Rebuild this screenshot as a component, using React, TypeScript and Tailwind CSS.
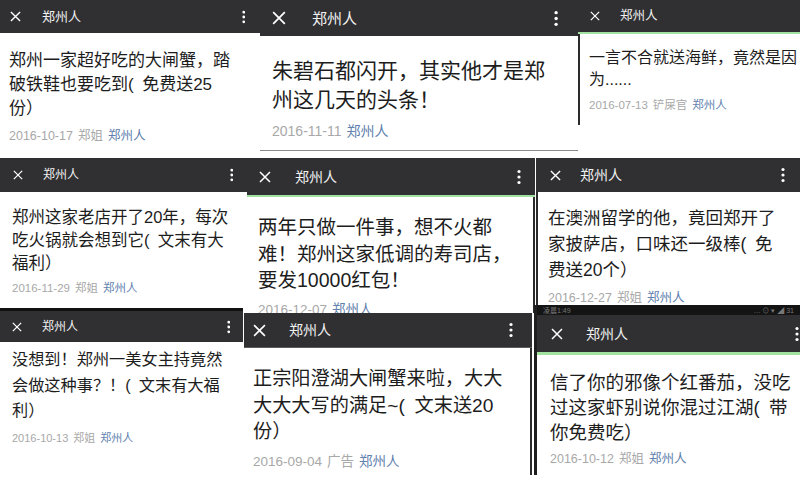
type Shot = {
  box: string;
  head: string;
  x: string;
  name: string;
  dots?: string;
  green?: string;
  status?: boolean;
  body: string;
  title: string;
  lines: string[];
  meta: string;
  date: string;
  author?: string;
};

// opening paren in the shots sits on the left of its cell, so "(" + en space
const shots: Shot[] = [
  {
    box: "left-0 top-0 w-[260px] h-[157px]",
    head: "h-[33px]",
    x: "ml-[10px] w-[11px] h-[11px]",
    name: "ml-[21px] text-[13px]",
    dots: "mr-[15px] h-[14px]",
    body: "flex-1 pl-[9px] pt-[16px]",
    title: "text-[17px] leading-[24px]",
    lines: ["郑州一家超好吃的大闸蟹，踏", "破铁鞋也要吃到(\u2002免费送25", "份）"],
    meta: "mt-[7px] text-[12.5px] leading-[16px]",
    date: "2016-10-17",
    author: "郑姐",
  },
  {
    box: "left-[260px] top-0 w-[318px] h-[151px] border-b border-[#8a8a8a]",
    head: "h-[36px]",
    x: "ml-[12px] w-[14px] h-[14px]",
    name: "ml-[26px] text-[15px]",
    dots: "mr-[20px] h-[17px]",
    body: "flex-1 pl-[12px] pt-[20px]",
    title: "text-[21px] leading-[29px]",
    lines: ["朱碧石都闪开，其实他才是郑", "州这几天的头条！"],
    meta: "mt-[8px] text-[14px] leading-[18px]",
    date: "2016-11-11",
  },
  {
    box: "left-[578px] top-0 w-[222px] h-[158px]",
    head: "h-[32px]",
    x: "ml-[12px] w-[10px] h-[10px]",
    name: "ml-[20px] text-[12.5px]",
    green: "h-[2px]",
    body: "flex-none h-[91px] border-l-2 border-[#2b2b2b] pl-[9px] pt-[13px]",
    title: "text-[16px] leading-[22px]",
    lines: ["一言不合就送海鲜，竟然是因", "为......"],
    meta: "mt-[7px] text-[11.5px] leading-[15px]",
    date: "2016-07-13",
    author: "铲屎官",
  },
  {
    box: "left-0 top-[158px] w-[247px] h-[144px]",
    head: "h-[34px]",
    x: "ml-[13px] w-[10px] h-[10px]",
    name: "ml-[20px] text-[12px]",
    dots: "mr-[14px] h-[14px]",
    body: "flex-1 pl-[12px] pt-[14px]",
    title: "text-[16.5px] leading-[23px]",
    lines: ["郑州这家老店开了20年，每次", "吃火锅就会想到它(\u2002文末有大", "福利）"],
    meta: "mt-[6px] text-[11.5px] leading-[15px]",
    date: "2016-11-29",
    author: "郑姐",
  },
  {
    box: "left-[247px] top-[158px] w-[288px] h-[155px]",
    head: "h-[37px]",
    x: "ml-[12px] w-[12px] h-[12px]",
    name: "ml-[24px] text-[14px]",
    dots: "mr-[14px] h-[16px]",
    green: "h-[2px]",
    body: "flex-1 border-r-2 border-[#2b2b2b] pl-[11px] pt-[17px]",
    title: "text-[19.5px] leading-[26.5px]",
    lines: ["两年只做一件事，想不火都", "难！郑州这家低调的寿司店，", "要发10000红包！"],
    meta: "mt-[7px] text-[13.5px] leading-[17px]",
    date: "2016-12-07",
  },
  {
    box: "left-[536px] top-[158px] w-[264px] h-[149px]",
    head: "h-[34px]",
    x: "ml-[14px] w-[11px] h-[11px]",
    name: "ml-[19px] text-[14px]",
    dots: "mr-[15px] h-[16px]",
    body: "flex-1 border-l-2 border-[#2b2b2b] pl-[10px] pt-[13px]",
    title: "text-[17.5px] leading-[26px]",
    lines: ["在澳洲留学的他，竟回郑开了", "家披萨店，口味还一级棒(\u2002免", "费送20个）"],
    meta: "mt-[7px] text-[12.5px] leading-[16px]",
    date: "2016-12-27",
    author: "郑姐",
  },
  {
    box: "left-0 top-[308px] w-[243px] h-[189px]",
    head: "h-[34px] border-t-[3px] border-[#111]",
    x: "ml-[12px] w-[10px] h-[10px]",
    name: "ml-[20px] text-[12px]",
    dots: "mr-[13px] h-[14px]",
    body: "flex-1 pl-[12px] pt-[5px]",
    title: "text-[16.2px] leading-[25.5px]",
    lines: ["没想到！郑州一美女主持竟然", "会做这种事？！(\u2002文末有大福", "利）"],
    meta: "mt-[7px] text-[11px] leading-[14px]",
    date: "2016-10-13",
    author: "郑姐",
  },
  {
    box: "left-[244px] top-[313px] w-[288px] h-[162px]",
    head: "h-[35px] border-b border-[#5c5c5c]",
    x: "ml-[9px] w-[13px] h-[13px]",
    name: "ml-[23px] text-[14px]",
    dots: "mr-[19px] h-[16px]",
    body: "flex-1 border-r-2 border-[#2b2b2b] pl-[9px] pt-[18px]",
    title: "text-[19.2px] leading-[26.5px]",
    lines: ["正宗阳澄湖大闸蟹来啦，大大", "大大大写的满足~(\u2002文末送20", "份）"],
    meta: "mt-[7px] text-[13.5px] leading-[17px]",
    date: "2016-09-04",
    author: "广告",
  },
  {
    box: "left-[534px] top-[305px] w-[266px] h-[170px] border-l-[3px] border-[#1e1e1e]",
    head: "h-[37px]",
    x: "ml-[14px] w-[12px] h-[12px]",
    name: "ml-[23px] text-[14px]",
    dots: "mr-[1px] h-[16px]",
    green: "h-[3px]",
    status: true,
    body: "flex-1 pl-[13px] pt-[15px]",
    title: "text-[18.5px] leading-[25px]",
    lines: ["信了你的邪像个红番茄，没吃", "过这家虾别说你混过江湖(\u2002带", "你免费吃）"],
    meta: "mt-[6px] text-[12.5px] leading-[16px]",
    date: "2016-10-12",
    author: "郑姐",
  },
];

const CloseIcon = ({ className }: { className: string }) => (
  <svg viewBox="0 0 12 12" className={`shrink-0 ${className}`}>
    <path d="M1 1 L11 11 M11 1 L1 11" stroke="#fff" strokeWidth="1.5" />
  </svg>
);

const Dots = ({ className }: { className: string }) => (
  <svg viewBox="0 0 4 16" className={`shrink-0 ${className}`}>
    <circle cx="2" cy="2.5" r="1.6" fill="#fff" />
    <circle cx="2" cy="8" r="1.6" fill="#fff" />
    <circle cx="2" cy="13.5" r="1.6" fill="#fff" />
  </svg>
);

const Card = ({ s }: { s: Shot }) => (
  <div className={`absolute flex flex-col overflow-hidden bg-white ${s.box}`}>
    {s.status && (
      <div className="flex h-[10px] items-center justify-between bg-[#141414] px-[6px] text-[7px] leading-none text-[#777]">
        <span>凌晨1:49</span>
        <span>… ⊙ ▾ ◢ 31</span>
      </div>
    )}
    <div className={`flex shrink-0 items-center bg-[#303032] text-[#f2f2f2] ${s.head}`}>
      <CloseIcon className={s.x} />
      <span className={`font-normal leading-none ${s.name}`}>郑州人</span>
      {s.dots && <Dots className={`ml-auto ${s.dots}`} />}
    </div>
    {s.green && <div className={`shrink-0 bg-[#a2e2a0] ${s.green}`} />}
    <div className={s.body}>
      <div className={`whitespace-nowrap text-[#1d1d1d] ${s.title}`}>
        {s.lines.map((l) => (
          <div key={l}>{l}</div>
        ))}
      </div>
      <div className={`flex gap-[5px] whitespace-nowrap text-[#a8a8a8] ${s.meta}`}>
        <span>{s.date}</span>
        {s.author && <span>{s.author}</span>}
        <span className="text-[#6080ad]">郑州人</span>
      </div>
    </div>
  </div>
);

export default function App() {
  return (
    <div className="relative h-[497px] w-[800px] overflow-hidden bg-white [font-family:'Liberation_Sans','Noto_Sans_CJK_SC',sans-serif]">
      {shots.map((s) => (
        <Card key={s.date} s={s} />
      ))}
    </div>
  );
}
